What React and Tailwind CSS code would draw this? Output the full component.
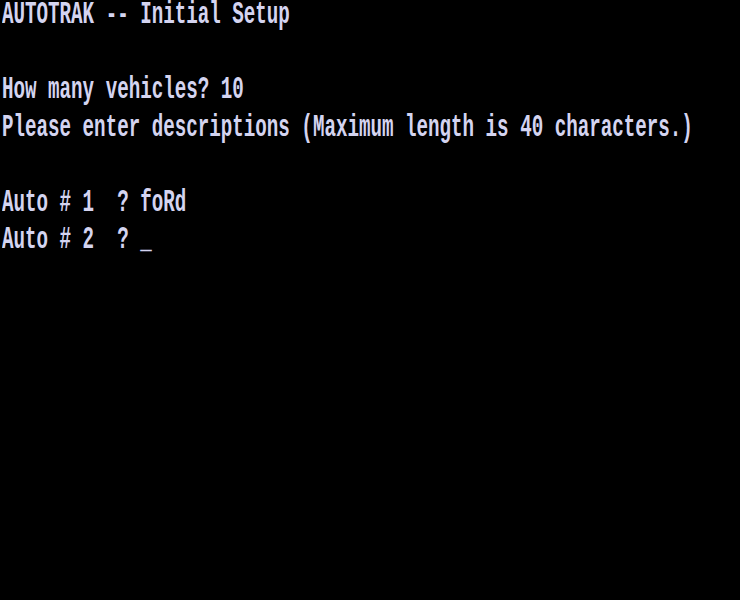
import React from "react";

const lines = [
  "AUTOTRAK -- Initial Setup",
  "",
  "How many vehicles? 10",
  "Please enter descriptions (Maximum length is 40 characters.)",
  "",
  "Auto # 1  ? foRd",
  "Auto # 2  ? _",
];

export default function App() {
  return (
    <div className="w-[740px] h-[600px] bg-black overflow-hidden flex flex-col text-[#d4d4f0] pl-[2px]">
      {lines.map((l, i) => (
        <div key={i} className="h-[37.5px] shrink-0 flex items-start">
          <span
            className="block whitespace-pre origin-top-left scale-y-[1.62] text-[19.2px] leading-none font-bold tracking-normal"
            style={{ fontFamily: '"Liberation Mono", monospace' }}
          >
            {l}
          </span>
        </div>
      ))}
    </div>
  );
}
